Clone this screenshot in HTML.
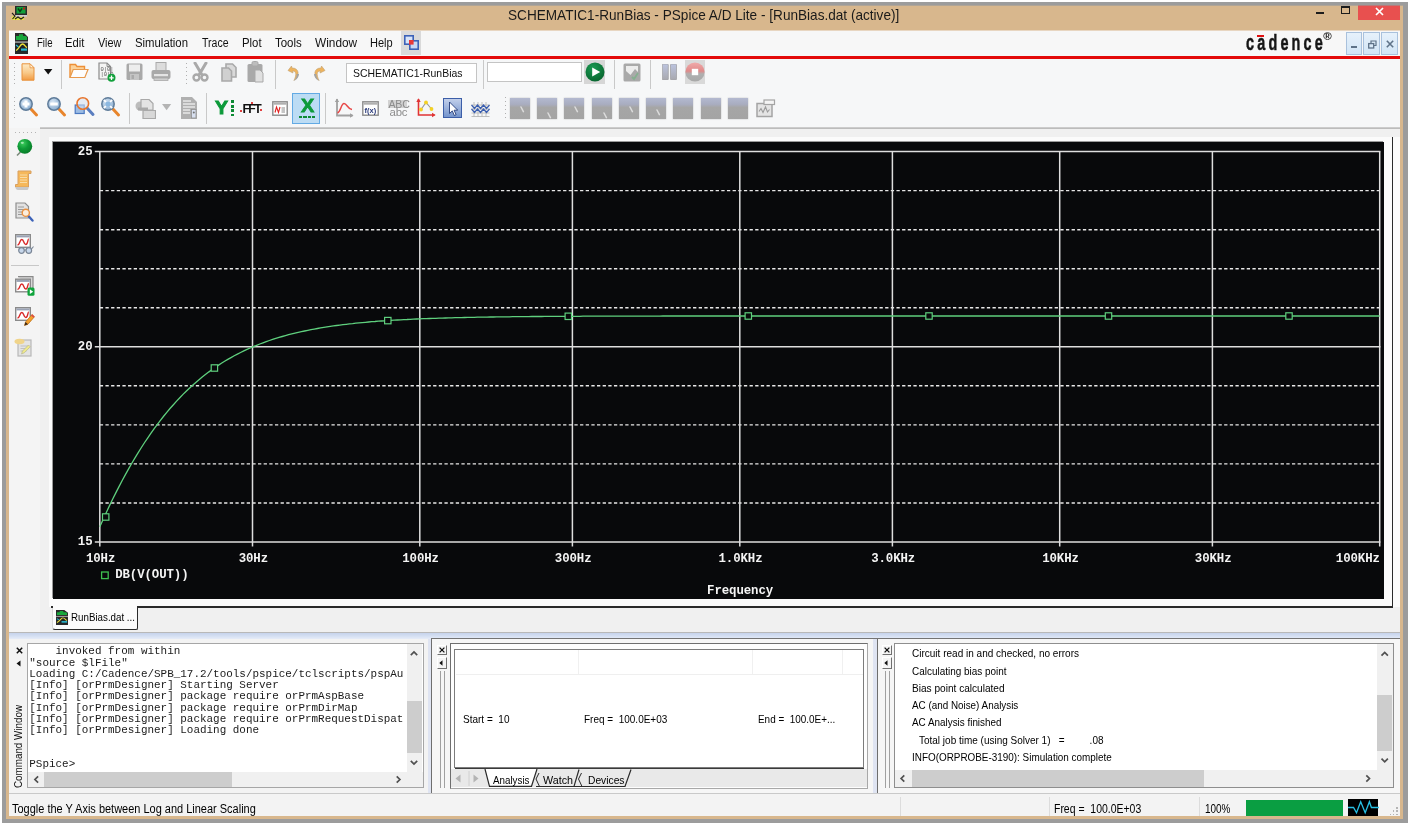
<!DOCTYPE html>
<html>
<head>
<meta charset="utf-8">
<title>PSpice</title>
<style>
*{box-sizing:border-box;margin:0;padding:0}
html,body{width:1412px;height:828px;overflow:hidden;background:#fff}
body{font-family:"Liberation Sans",sans-serif;font-size:12px;color:#000;position:relative}
.abs{position:absolute}
#wgrey{left:2px;top:2px;width:1406px;height:821px;background:#9c9c9c}
#wtan{left:6px;top:6px;width:1397px;height:813px;background:#d8b78d;box-shadow:0 -1px 0 #b0a597}
#content{left:9px;top:30px;width:1391px;height:786px;background:#f1f1f1;overflow:hidden}
/* title */
#title{left:508.3px;top:6px;white-space:nowrap;font-size:15px;line-height:18px;color:#1a1a1a}
#closebtn{left:1358px;top:6px;width:42px;height:14px;background:#e8504f}
/* menu */
#menubar{left:0;top:0;width:1391px;height:26px;background:#f7f7f7}
.mi{position:absolute;top:6px;font-size:12.5px;line-height:15px;color:#111;white-space:nowrap}
#redline{left:0;top:26px;width:1391px;height:3px;background:#e30a0a}
#tb1{left:0;top:29px;width:1391px;height:31px;background:#f6f7f8}
#tb2{left:0;top:60px;width:1391px;height:38px;background:#f6f7f8}
#tbline{left:31px;top:97px;width:1360px;height:2px;background:linear-gradient(#d4d4d4,#b4b4b4)}
.vsep{position:absolute;width:1px;background:#cfcfcf}
.tbox{position:absolute;background:#fff;border:1px solid #c4c4c4;font-size:10.5px;line-height:18px;padding-left:6px;color:#111;white-space:nowrap;overflow:hidden}
/* workspace */
#side{left:0;top:98px;width:31px;height:508px;background:#f4f4f4}
#mdi{left:31px;top:99px;width:1360px;height:507px;background:#f0f0f0}
#mdiin{left:40px;top:107px;width:1351px;height:470px;background:#fbfbfb}
#plot{left:44px;top:112px;width:1331px;height:457px;background:#08090b;overflow:hidden;box-shadow:-1px -1px 0 #9a9a9a}
.pl{position:absolute;font-family:"Liberation Mono",monospace;font-weight:bold;font-size:12.4px;line-height:12px;color:#f4f4f4;white-space:nowrap;letter-spacing:-0.1px}
/* bottom panels */
#bsep{left:0;top:602px;width:1391px;height:7px;background:linear-gradient(#b8b8b8 0,#b8b8b8 1px,#c6d3ec 1px,#d4dff2 4px,#e6ecf8 7px)}
#bottom{left:0;top:609px;width:1391px;height:154px;background:#f0f0f0}
#status{left:0;top:763px;width:1391px;height:23px;background:#f3f3f3;border-top:1px solid #c9c9c9}
.mono{font-family:"Liberation Mono",monospace}
</style>
</head>
<body><div id="all" style="position:absolute;left:0;top:0;width:1412px;height:828px;will-change:transform">
<div id="wgrey" class="abs"></div>
<div id="wtan" class="abs"></div>
<div id="title" class="abs"><span style="display:inline-block;white-space:pre;font-size:14.6px;font-weight:normal;transform:scaleX(0.9320);transform-origin:0 50%;color:#1a1a1a">SCHEMATIC1-RunBias - PSpice A/D Lite - [RunBias.dat (active)]</span></div>
<div id="closebtn" class="abs"></div><div class="abs" style="left:1358px;top:5px;width:42px;height:1px;background:#b87a7a"></div>
<svg class="abs" style="left:10.0px;top:6.0px" width="18" height="16" viewBox="0 0 18 16" ><rect x="5" y="0" width="12" height="9" fill="#2a2a2a"/><rect x="6.5" y="1" width="9" height="6.5" fill="#11a03a"/><path d="M8 2.5l2 3 2-3" stroke="#0a3a12" stroke-width="1.4" fill="none"/><rect x="13" y="1.5" width="2" height="2" fill="#c01818"/><rect x="4" y="9" width="13" height="1.6" fill="#cfcfcf"/><path d="M1 6l3 3-3 3 2 2h11v-3H6z" fill="#e8e24a"/><path d="M2 7l3 3-2.5 3M5 13l3-2 3 2 3-2" stroke="#202020" stroke-width="1.1" fill="none"/></svg>
<div class="abs" style="left:1316px;top:12px;width:8px;height:2px;background:#1c1c1c"></div>
<div class="abs" style="left:1341px;top:6px;width:9px;height:8px;border:1.3px solid #1c1c1c;border-top-width:2px"></div>
<svg class="abs" style="left:1374.5px;top:6.5px" width="9" height="9" viewBox="0 0 9 9" ><path d="M1 1l7 7M8 1l-7 7" stroke="#fff" stroke-width="1.7"/></svg>
<div id="content" class="abs">
  <div id="menubar" class="abs"><div class="abs" style="left:0;top:0;width:1391px;height:1px;background:#e8d6c1"></div>
    <span class="mi" style="left:27.5px"><span style="display:inline-block;white-space:pre;font-size:12px;font-weight:normal;transform:scaleX(0.8013);transform-origin:0 50%;">File</span></span>
    <span class="mi" style="left:56.4px"><span style="display:inline-block;white-space:pre;font-size:12px;font-weight:normal;transform:scaleX(0.9378);transform-origin:0 50%;">Edit</span></span>
    <span class="mi" style="left:88.5px"><span style="display:inline-block;white-space:pre;font-size:12px;font-weight:normal;transform:scaleX(0.9071);transform-origin:0 50%;">View</span></span>
    <span class="mi" style="left:125.6px"><span style="display:inline-block;white-space:pre;font-size:12px;font-weight:normal;transform:scaleX(0.9459);transform-origin:0 50%;">Simulation</span></span>
    <span class="mi" style="left:192.9px"><span style="display:inline-block;white-space:pre;font-size:12px;font-weight:normal;transform:scaleX(0.8765);transform-origin:0 50%;">Trace</span></span>
    <span class="mi" style="left:232.5px"><span style="display:inline-block;white-space:pre;font-size:12px;font-weight:normal;transform:scaleX(0.9474);transform-origin:0 50%;">Plot</span></span>
    <span class="mi" style="left:265.9px"><span style="display:inline-block;white-space:pre;font-size:12px;font-weight:normal;transform:scaleX(0.9566);transform-origin:0 50%;">Tools</span></span>
    <span class="mi" style="left:305.7px"><span style="display:inline-block;white-space:pre;font-size:12px;font-weight:normal;transform:scaleX(0.9862);transform-origin:0 50%;">Window</span></span>
    <span class="mi" style="left:360.9px"><span style="display:inline-block;white-space:pre;font-size:12px;font-weight:normal;transform:scaleX(0.9195);transform-origin:0 50%;">Help</span></span>
    <svg class="abs" style="left:6.0px;top:3.0px" width="13" height="21" viewBox="0 0 13 21" preserveAspectRatio="none"><path d="M0 0h9l4 4v17H0z" fill="#2a2a2a"/><path d="M1 5V3h3V1.3h4V3h2.5l1.5 1v3H1z" fill="#18a83c"/><rect x="0" y="8.3" width="13" height="1.6" fill="#9a9a9a"/><rect x="1" y="10.5" width="11" height="8" fill="#1f2426"/><path d="M1 17.5c3-1 4-6.5 6.5-6.5s2.5 3 4.5 3.5" stroke="#f0e23a" stroke-width="1.3" fill="none"/><rect x="6" y="15.5" width="6" height="2.2" fill="#28b8d0"/><path d="M1 12l2.5 2" stroke="#28b8d0" stroke-width="1.2"/></svg>
<div class="abs" style="left:391.5px;top:1px;width:20.5px;height:24px;background:#dadada"></div>
<svg class="abs" style="left:394.5px;top:4.5px" width="15" height="15" viewBox="0 0 15 15" ><rect x="0.8" y="0.8" width="8.4" height="8.4" fill="#d8e4f8" stroke="#3c62b8" stroke-width="1.6"/><rect x="5.8" y="5.8" width="8.4" height="8.4" fill="#c8d8f4" stroke="#3c62b8" stroke-width="1.6"/><rect x="5" y="5" width="4.6" height="4.6" fill="#e83838"/></svg>
<div class="abs" style="left:1236.5px;top:1.1px;font-weight:bold;font-size:21.2px;line-height:24px;color:#161616;white-space:nowrap;letter-spacing:4.7px;-webkit-text-stroke:0.5px #161616;transform:scaleX(0.68);transform-origin:0 0">cadence</div>
<div class="abs" style="left:1248.4px;top:5px;width:6.4px;height:1.6px;background:#e01010"></div>
<div class="abs" style="left:1314.2px;top:-0.5px;font-size:11.5px;line-height:12px;color:#151515;font-weight:bold">&#174;</div>
<div class="abs" style="left:1337.0px;top:2px;width:16.4px;height:22.6px;background:linear-gradient(#e6f1fb,#d2e5f6);border:1px solid #a9c1dc"></div>
<div class="abs" style="left:1354.4px;top:2px;width:16.4px;height:22.6px;background:linear-gradient(#e6f1fb,#d2e5f6);border:1px solid #a9c1dc"></div>
<div class="abs" style="left:1372.2px;top:2px;width:16.4px;height:22.6px;background:linear-gradient(#e6f1fb,#d2e5f6);border:1px solid #a9c1dc"></div>
<div class="abs" style="left:1341.5px;top:15.8px;width:6px;height:2px;background:#5e7288"></div>
<svg class="abs" style="left:1359.0px;top:9.5px" width="9" height="9" viewBox="0 0 9 9" ><path d="M3 3V1h5v4.5H6" stroke="#5e7288" stroke-width="1.2" fill="none"/><rect x="0.7" y="3.6" width="5" height="4.4" fill="none" stroke="#5e7288" stroke-width="1.3"/></svg>
<svg class="abs" style="left:1376.5px;top:10.0px" width="8" height="8" viewBox="0 0 8 8" ><path d="M0.8 0.8l6.4 6.4M7.2 0.8l-6.4 6.4" stroke="#5e7288" stroke-width="1.6"/></svg>
  </div>
  <div id="redline" class="abs"></div>
  <div id="tb1" class="abs">
    <div class="abs" style="left:4.5px;top:4px;width:1px;height:22px;background:repeating-linear-gradient(#b0b0b0 0 1.5px,transparent 1.5px 4px)"></div>
<svg class="abs" style="left:11.5px;top:3.5px" width="14" height="18" viewBox="0 0 14 18" ><defs><linearGradient id="gN" x1="0" y1="0" x2="0" y2="1"><stop offset="0" stop-color="#fdebc8"/><stop offset="0.55" stop-color="#f8c888"/><stop offset="1" stop-color="#f29a42"/></linearGradient></defs><path d="M1 0.8h8l4 4v12.4H1z" fill="url(#gN)" stroke="#e8923c" stroke-width="1"/><path d="M9 0.8v4h4z" fill="#fff3dc" stroke="#e8923c" stroke-width="0.8"/></svg>
<svg class="abs" style="left:35.0px;top:9.8px" width="9" height="6" viewBox="0 0 9 6" ><path d="M0 0h8.4L4.2 5.5z" fill="#111"/></svg>
<div class="vsep" style="left:51.5px;top:1.0px;height:28.5px;background:#c9c9c9"></div>
<svg class="abs" style="left:59.5px;top:4.0px" width="20" height="16" viewBox="0 0 20 16" ><path d="M1 14.5V1.5h5.5l1.5 2h7.5v3" fill="#fbd29a" stroke="#ee8f36" stroke-width="1.4"/><path d="M1 14.5l3.2-8h14.8l-3.2 8z" fill="#fdfdfd" stroke="#e89a4e" stroke-width="1.2"/></svg>
<svg class="abs" style="left:88.5px;top:3.0px" width="18" height="20" viewBox="0 0 18 20" ><path d="M1 1h8l3.5 3.5V17H1z" fill="#f4f4f4" stroke="#8a8a8a" stroke-width="1.2"/><path d="M9 1v3.5h3.5" fill="none" stroke="#8a8a8a" stroke-width="1"/><text x="2.4" y="8.5" font-family="Liberation Mono" font-size="5.5" fill="#555">0|0|</text><text x="2.4" y="13.5" font-size="5.5" font-family="Liberation Mono" fill="#555">|0|0</text><circle cx="13.5" cy="15.8" r="4" fill="#12a03c"/><path d="M11.3 15.8h4.4M13.5 13.6v4.4" stroke="#fff" stroke-width="1.3"/></svg>
<svg class="abs" style="left:116.5px;top:4.0px" width="17" height="18" viewBox="0 0 17 18" ><rect x="0.5" y="0.5" width="16" height="16.5" rx="1.5" fill="#a9a9a9"/><rect x="3" y="1.5" width="11" height="7" fill="#ededed"/><rect x="4" y="11" width="9" height="6" fill="#c4c4c4"/><rect x="5.5" y="12" width="2.5" height="4" fill="#a9a9a9"/></svg>
<svg class="abs" style="left:141.5px;top:2.5px" width="20" height="20" viewBox="0 0 20 20" ><rect x="5" y="0.5" width="10" height="8" fill="#dcdcdc" stroke="#a9a9a9" stroke-width="1"/><rect x="0.5" y="8" width="19" height="9" rx="2" fill="#a9a9a9"/><rect x="3" y="12" width="14" height="2.2" fill="#e4e4e4"/><rect x="3" y="16" width="14" height="2.5" fill="#cfcfcf" stroke="#a9a9a9" stroke-width="0.8"/></svg>
<div class="abs" style="left:176.5px;top:4px;width:1px;height:22px;background:repeating-linear-gradient(#b0b0b0 0 1.5px,transparent 1.5px 4px)"></div>
<svg class="abs" style="left:183.0px;top:2.5px" width="17" height="21" viewBox="0 0 17 21" ><path d="M3 1l6.5 11M14 1L7.5 12" stroke="#a9a9a9" stroke-width="3" stroke-linecap="round"/><circle cx="4.5" cy="15.5" r="3" fill="none" stroke="#a9a9a9" stroke-width="2.4"/><circle cx="12.5" cy="15.5" r="3" fill="none" stroke="#a9a9a9" stroke-width="2.4"/></svg>
<svg class="abs" style="left:211.5px;top:3.5px" width="16" height="19" viewBox="0 0 16 19" ><path d="M5 1h6.5l3.5 3.5V14H5z" fill="#d9d9d9" stroke="#a9a9a9" stroke-width="1.6"/><path d="M1 5h6.5l3 3V18H1z" fill="#d0d0d0" stroke="#a9a9a9" stroke-width="1.6"/></svg>
<svg class="abs" style="left:238.0px;top:1.5px" width="17" height="22" viewBox="0 0 17 22" ><rect x="0.5" y="3" width="15" height="18" rx="1.5" fill="#a9a9a9"/><rect x="5" y="0.5" width="6" height="4.5" rx="1.5" fill="#bdbdbd" stroke="#a9a9a9"/><path d="M8 9h5l3 3v9H8z" fill="#e0e0e0" stroke="#a9a9a9" stroke-width="1"/></svg>
<div class="vsep" style="left:265.5px;top:1.0px;height:28.5px;background:#c9c9c9"></div>
<svg class="abs" style="left:277.5px;top:5.5px" width="13" height="17" viewBox="0 0 13 17" ><path d="M4.5 1L1 5.5l5 2.5-0.5-2c3.5 0 4.5 3 1.5 9.5 6-5 5.5-12.5-2-12.5z" fill="#eeb45e" stroke="#c0a070" stroke-width="0.6"/><path d="M9.6 9c0.6 2-0.6 4.5-2.6 7 3.5-2 5-4.5 5-7z" fill="#a3a3a3"/></svg>
<svg class="abs" style="left:304.0px;top:5.5px" width="13" height="17" viewBox="0 0 13 17" ><g transform="translate(13,0) scale(-1,1)"><path d="M4.5 1L1 5.5l5 2.5-0.5-2c3.5 0 4.5 3 1.5 9.5 6-5 5.5-12.5-2-12.5z" fill="#eeb45e" stroke="#c0a070" stroke-width="0.6"/><path d="M9.6 9c0.6 2-0.6 4.5-2.6 7 3.5-2 5-4.5 5-7z" fill="#a3a3a3"/></g></svg>
<div class="tbox" style="left:337.2px;top:3.6px;width:131px;height:20px"><span style="display:inline-block;white-space:pre;font-size:10.8px;font-weight:normal;transform:scaleX(0.9673);transform-origin:0 50%;">SCHEMATIC1-RunBias</span></div>
<div class="vsep" style="left:474.0px;top:1.0px;height:28.5px;background:#c9c9c9"></div>
<div class="tbox" style="left:478.3px;top:3.3px;width:94.5px;height:20px"></div>
<div class="abs" style="left:575.2px;top:1.4px;width:20.6px;height:23.6px;background:#d6d6d6"></div>
<svg class="abs" style="left:576.3px;top:3.2px" width="20" height="20" viewBox="0 0 20 20" ><defs><radialGradient id="gP" cx="0.4" cy="0.3" r="0.8"><stop offset="0" stop-color="#1a9a52"/><stop offset="1" stop-color="#06602c"/></radialGradient></defs><circle cx="10" cy="10" r="9.5" fill="url(#gP)"/><path d="M7.2 5.4v9.2l8-4.6z" fill="#fff"/></svg>
<div class="vsep" style="left:605.2px;top:1.0px;height:28.5px;background:#c9c9c9"></div>
<svg class="abs" style="left:613.5px;top:3.5px" width="18" height="19" viewBox="0 0 18 19" ><rect x="0.5" y="0.5" width="17" height="18" rx="1.5" fill="#a9a9a9"/><path d="M3 3h12v6l-3-3-4.5 6L3 8z" fill="#ececec"/><path d="M9 14l2 2 4-6" stroke="#86b090" stroke-width="1.8" fill="none"/></svg>
<div class="vsep" style="left:641.3px;top:1.0px;height:28.5px;background:#c9c9c9"></div>
<svg class="abs" style="left:652.5px;top:4.8px" width="15" height="16" viewBox="0 0 15 16" ><defs><linearGradient id="gPa" x1="0" y1="0" x2="0" y2="1"><stop offset="0" stop-color="#bcc4e0"/><stop offset="1" stop-color="#a8a8ae"/></linearGradient></defs><rect x="0.3" y="0" width="6" height="16" rx="1" fill="url(#gPa)" stroke="#a2a2a6" stroke-width="0.8"/><rect x="8.5" y="0" width="6" height="16" rx="1" fill="url(#gPa)" stroke="#a2a2a6" stroke-width="0.8"/></svg>
<div class="abs" style="left:676.2px;top:1.4px;width:20px;height:23.6px;background:#d9d9d9"></div>
<svg class="abs" style="left:676.4px;top:2.8px" width="20" height="20" viewBox="0 0 20 20" ><defs><linearGradient id="gSt" x1="0" y1="0" x2="0" y2="1"><stop offset="0" stop-color="#f0aaaa"/><stop offset="0.450" stop-color="#e08a8a"/><stop offset="0.6" stop-color="#b0b0b0"/><stop offset="1" stop-color="#a8a8a8"/></linearGradient></defs><circle cx="10" cy="10" r="9.6" fill="url(#gSt)"/><rect x="6.8" y="6.8" width="6.4" height="6.4" fill="#fff"/></svg>
  </div>
  <div id="tb2" class="abs">
    <div class="abs" style="left:4.5px;top:7px;width:1px;height:23px;background:repeating-linear-gradient(#b0b0b0 0 1.5px,transparent 1.5px 4px)"></div>
<svg class="abs" style="left:9.3px;top:6.2px" width="22" height="22" viewBox="0 0 22 22" ><defs><radialGradient id="gL" cx="0.4" cy="0.35" r="0.7"><stop offset="0" stop-color="#d8e6f4"/><stop offset="1" stop-color="#86aace"/></radialGradient></defs><path d="M12.5 12.5l6 6.5" stroke="#e8852c" stroke-width="3" stroke-linecap="round"/><circle cx="8" cy="8" r="6.2" fill="url(#gL)" stroke="#5f7c9a" stroke-width="1.5"/><path d="M4.5 8h7M8 4.5v7" stroke="#fff" stroke-width="3"/></svg>
<svg class="abs" style="left:36.9px;top:6.2px" width="22" height="22" viewBox="0 0 22 22" ><defs><radialGradient id="gL" cx="0.4" cy="0.35" r="0.7"><stop offset="0" stop-color="#d8e6f4"/><stop offset="1" stop-color="#86aace"/></radialGradient></defs><path d="M12.5 12.5l6 6.5" stroke="#e8852c" stroke-width="3" stroke-linecap="round"/><circle cx="8" cy="8" r="6.2" fill="url(#gL)" stroke="#5f7c9a" stroke-width="1.5"/><path d="M4.2 8h7.6" stroke="#fff" stroke-width="3"/></svg>
<svg class="abs" style="left:64.5px;top:6.0px" width="22" height="22" viewBox="0 0 22 22" ><rect x="1.2" y="9" width="9" height="8.5" fill="#9cbce4" stroke="#4a78c0" stroke-width="1.2"/><path d="M13 12l6 6.5" stroke="#5a7ec0" stroke-width="3" stroke-linecap="round"/><circle cx="8.8" cy="7.5" r="5.8" fill="#d6e2f2" fill-opacity="0.55" stroke="#e8752c" stroke-width="1.6"/></svg>
<svg class="abs" style="left:91.4px;top:6.2px" width="22" height="22" viewBox="0 0 22 22" ><defs><radialGradient id="gL" cx="0.4" cy="0.35" r="0.7"><stop offset="0" stop-color="#d8e6f4"/><stop offset="1" stop-color="#86aace"/></radialGradient></defs><path d="M12.5 12.5l6 6.5" stroke="#e8852c" stroke-width="3" stroke-linecap="round"/><circle cx="8" cy="8" r="6.2" fill="url(#gL)" stroke="#5f7c9a" stroke-width="1.5"/><circle cx="8" cy="8" r="2.6" fill="#8cb8e0"/><path d="M3.8 3.8l2 2M12.2 3.8l-2 2M3.8 12.2l2-2M12.2 12.2l-2-2" stroke="#fff" stroke-width="1.8"/></svg>
<div class="vsep" style="left:120.4px;top:3.0px;height:31.0px;background:#c9c9c9"></div>
<svg class="abs" style="left:126.0px;top:9.0px" width="21" height="20" viewBox="0 0 21 20" ><circle cx="5" cy="7" r="4.5" fill="#bcbcbc"/><path d="M6 0.5h8l4 4V11H6z" fill="#e4e4e4" stroke="#a9a9a9" stroke-width="1.2"/><rect x="3" y="8.5" width="10" height="3" fill="#a9a9a9"/><path d="M8 11.5h12.5V19.5H8z" fill="#d8d8d8" stroke="#a9a9a9" stroke-width="1.2"/></svg>
<svg class="abs" style="left:153.3px;top:13.5px" width="10" height="7" viewBox="0 0 10 7" ><path d="M0 0h9.2L4.6 6.2z" fill="#b4b4b4"/></svg>
<svg class="abs" style="left:170.5px;top:6.0px" width="18" height="24" viewBox="0 0 18 24" ><path d="M1 1h11l5 5v17H1z" fill="#b0b0b0"/><path d="M3 5h8M3 8h12M3 11h12M3 14h7M3 17h7" stroke="#e8e8e8" stroke-width="1.3"/><rect x="11.5" y="13.5" width="4.5" height="8.5" fill="#d8e0f0" stroke="#909090" stroke-width="0.8"/><circle cx="13.8" cy="16.5" r="1" fill="#707070"/></svg>
<div class="vsep" style="left:197.2px;top:3.0px;height:31.0px;background:#c9c9c9"></div>
<div class="abs" style="left:206.4px;top:6.8px;font-weight:bold;font-size:18.5px;line-height:22px;color:#0c9a3a;-webkit-text-stroke:0.9px #0c9a3a;transform:scaleX(1.06);transform-origin:0 0">Y</div>
<div class="abs" style="left:221.8px;top:10.299999999999997px;width:2.8px;height:16px;background:repeating-linear-gradient(#0c8a34 0 3.2px,transparent 3.2px 4.6px)"></div>
<div class="abs" style="left:233.4px;top:11.5px;font-weight:bold;font-size:12.2px;line-height:14px;color:#111;letter-spacing:-1.5px">FFT</div>
<div class="abs" style="left:231px;top:19.599999999999994px;width:2px;height:2px;background:#e04040"></div><div class="abs" style="left:251px;top:19.200000000000003px;width:2px;height:2px;background:#e04040"></div><div class="abs" style="left:241.5px;top:11.5px;width:2px;height:2px;background:#e04040"></div>
<svg class="abs" style="left:262.8px;top:10.8px" width="16" height="15" viewBox="0 0 16 15" ><rect x="0.8" y="0.8" width="14.4" height="13.4" fill="#fff" stroke="#8a8a8a" stroke-width="1.4"/><rect x="1.5" y="1.5" width="13" height="2.2" fill="#b0b0b0"/><path d="M3 11.5l1.5-5.5 2 5.5 1.5-5.5" stroke="#e02020" stroke-width="1.1" fill="none"/><path d="M9.5 7h3.5M9.5 9h3.5M9.5 11h3.5" stroke="#808080" stroke-width="0.9"/></svg>
<div class="abs" style="left:283.2px;top:2.9000000000000057px;width:27.6px;height:31.4px;background:#bcdcf4;border:1px solid #62aae4"></div>
<div class="abs" style="left:291.6px;top:5.2px;font-weight:bold;font-size:18.4px;line-height:22px;color:#0c9a3a;-webkit-text-stroke:0.8px #0c9a3a;transform:scaleX(1.08);transform-origin:0 0">X</div>
<div class="abs" style="left:290.2px;top:25.599999999999994px;width:15.6px;height:2.8px;background:repeating-linear-gradient(90deg,#0c8a34 0 3.4px,transparent 3.4px 4.4px)"></div>
<div class="vsep" style="left:315.7px;top:3.0px;height:31.0px;background:#c9c9c9"></div>
<svg class="abs" style="left:324.5px;top:8.0px" width="20" height="21" viewBox="0 0 20 21" ><path d="M3 1v16.5h15.5" stroke="#a0a0a0" stroke-width="1.8" fill="none"/><path d="M0.8 4L3 0.5 5.2 4zM16 15.3l3.5 2.2-3.5 2.2z" fill="#a0a0a0"/><path d="M3.5 15C7 13.5 7 5.5 10 5.5s3.5 5.5 8 6" stroke="#e84848" stroke-width="1.5" fill="none"/></svg>
<svg class="abs" style="left:353.4px;top:10.8px" width="17" height="15" viewBox="0 0 17 15" ><rect x="0.8" y="0.8" width="15.4" height="13.4" fill="#fff" stroke="#8a8a8a" stroke-width="1.4"/><rect x="1.5" y="1.5" width="14" height="2.2" fill="#b0b0b0"/><text x="2.6" y="12" font-size="7.5" font-weight="bold" font-family="Liberation Sans" fill="#2a3a7a">f(x)</text></svg>
<div class="abs" style="left:379.3px;top:9.599999999999994px;width:18.6px;height:8.6px;background:#d2d2d2"></div>
<div class="abs" style="left:379.6px;top:7.799999999999997px;font-size:10.6px;line-height:12px;color:#8c8c8c;letter-spacing:-0.3px">ABC</div>
<div class="abs" style="left:380.6px;top:16.400000000000006px;font-size:11.4px;line-height:12px;color:#8c8c8c;letter-spacing:-0.3px">abc</div>
<svg class="abs" style="left:406.5px;top:8.0px" width="20" height="21" viewBox="0 0 20 21" ><path d="M2.5 1v16h16" stroke="#e03434" stroke-width="1.6" fill="none"/><path d="M0.3 4L2.5 0.3 4.7 4zM16 14.8l3.7 2.2-3.7 2.2z" fill="#e03434"/><path d="M5 11.5l5-7 5.5 6.5" stroke="#9a9a9a" stroke-width="1.1" fill="none"/><circle cx="5" cy="11.5" r="1.9" fill="#f4d224"/><circle cx="10" cy="4.5" r="1.9" fill="#f4d224"/><circle cx="15.5" cy="11" r="1.9" fill="#f4d224"/></svg>
<div class="abs" style="left:434px;top:8.200000000000003px;width:19px;height:19.6px;background:linear-gradient(#c2cfea,#7494cc);border:1.3px solid #3c5ea8"></div>
<svg class="abs" style="left:439.0px;top:10.5px" width="10" height="16" viewBox="0 0 10 16" ><path d="M1.5 1v11.5l2.8-2.6 2 4.6 1.8-0.8-2-4.5h3.6z" fill="#fff" stroke="#223a78" stroke-width="0.9"/></svg>
<svg class="abs" style="left:461.5px;top:10.5px" width="19" height="17" viewBox="0 0 19 17" ><path d="M3 1v15M7 1v15M11 1v15M15 1v15M0.5 4h18M0.5 8h18M0.5 12h18M0.5 15.5h18" stroke="#b8b8b8" stroke-width="0.9"/><path d="M0.5 4l3 3.5 3-3.5 3 3.5 3-3.5 3 3.5 3-3.5M0.5 8l3 3.5 3-3.5 3 3.5 3-3.5 3 3.5 3-3.5" stroke="#3a5eb0" stroke-width="1.2" fill="none"/></svg>
<div class="abs" style="left:495.5px;top:7px;width:1px;height:23px;background:repeating-linear-gradient(#b0b0b0 0 1.5px,transparent 1.5px 4px)"></div>
<div class="abs" style="left:500.6px;top:8.2px;width:20px;height:21.3px;background:linear-gradient(#b3b9d0 0,#a9adc0 30%,#a6a6a6 45%,#a4a4a4 100%);box-shadow:0 0 1.5px #bbb"></div>
<svg class="abs" style="left:510.8px;top:15.8px" width="5" height="7" viewBox="0 0 5 7" ><path d="M1 1l2.4 4.6" stroke="#dcdcdc" stroke-width="1.5" stroke-linecap="round"/></svg>
<div class="abs" style="left:527.9px;top:8.2px;width:20px;height:21.3px;background:linear-gradient(#b3b9d0 0,#a9adc0 30%,#a6a6a6 45%,#a4a4a4 100%);box-shadow:0 0 1.5px #bbb"></div>
<svg class="abs" style="left:537.7px;top:22.0px" width="5" height="7" viewBox="0 0 5 7" ><path d="M1 1l2.4 4.6" stroke="#dcdcdc" stroke-width="1.5" stroke-linecap="round"/></svg>
<div class="abs" style="left:555.2px;top:8.2px;width:20px;height:21.3px;background:linear-gradient(#b3b9d0 0,#a9adc0 30%,#a6a6a6 45%,#a4a4a4 100%);box-shadow:0 0 1.5px #bbb"></div>
<svg class="abs" style="left:565.2px;top:15.8px" width="5" height="7" viewBox="0 0 5 7" ><path d="M1 1l2.4 4.6" stroke="#dcdcdc" stroke-width="1.5" stroke-linecap="round"/></svg>
<div class="abs" style="left:582.5px;top:8.2px;width:20px;height:21.3px;background:linear-gradient(#b3b9d0 0,#a9adc0 30%,#a6a6a6 45%,#a4a4a4 100%);box-shadow:0 0 1.5px #bbb"></div>
<svg class="abs" style="left:593.5px;top:22.0px" width="5" height="7" viewBox="0 0 5 7" ><path d="M1 1l2.4 4.6" stroke="#dcdcdc" stroke-width="1.5" stroke-linecap="round"/></svg>
<div class="abs" style="left:609.8px;top:8.2px;width:20px;height:21.3px;background:linear-gradient(#b3b9d0 0,#a9adc0 30%,#a6a6a6 45%,#a4a4a4 100%);box-shadow:0 0 1.5px #bbb"></div>
<svg class="abs" style="left:619.9px;top:15.8px" width="5" height="7" viewBox="0 0 5 7" ><path d="M1 1l2.4 4.6" stroke="#dcdcdc" stroke-width="1.5" stroke-linecap="round"/></svg>
<div class="abs" style="left:637.1px;top:8.2px;width:20px;height:21.3px;background:linear-gradient(#b3b9d0 0,#a9adc0 30%,#a6a6a6 45%,#a4a4a4 100%);box-shadow:0 0 1.5px #bbb"></div>
<svg class="abs" style="left:646.8px;top:19.0px" width="5" height="7" viewBox="0 0 5 7" ><path d="M1 1l2.4 4.6" stroke="#dcdcdc" stroke-width="1.5" stroke-linecap="round"/></svg>
<div class="abs" style="left:664.4px;top:8.2px;width:20px;height:21.3px;background:linear-gradient(#b3b9d0 0,#a9adc0 30%,#a6a6a6 45%,#a4a4a4 100%);box-shadow:0 0 1.5px #bbb"></div>
<div class="abs" style="left:691.7px;top:8.2px;width:20px;height:21.3px;background:linear-gradient(#b3b9d0 0,#a9adc0 30%,#a6a6a6 45%,#a4a4a4 100%);box-shadow:0 0 1.5px #bbb"></div>
<div class="abs" style="left:719.0px;top:8.2px;width:20px;height:21.3px;background:linear-gradient(#b3b9d0 0,#a9adc0 30%,#a6a6a6 45%,#a4a4a4 100%);box-shadow:0 0 1.5px #bbb"></div>
<svg class="abs" style="left:747.0px;top:8.5px" width="20" height="19" viewBox="0 0 20 19" ><rect x="1" y="4.5" width="15" height="13" fill="#e4e4e4" stroke="#a4a4a4" stroke-width="1.5"/><rect x="8" y="1" width="10.5" height="4.5" fill="#f4f4f4" stroke="#a4a4a4" stroke-width="1.2"/><path d="M3 12.5l2-3 2 4 2.5-5.5 2 5 2-2.5" stroke="#9a9a9a" stroke-width="1.1" fill="none"/></svg>
  </div>
  <div id="side" class="abs">
    <div class="abs" style="left:5.5px;top:4px;width:21px;height:1px;background:repeating-linear-gradient(90deg,#b4b4b4 0 1.5px,transparent 1.5px 4px)"></div>
<svg class="abs" style="left:6.0px;top:10.0px" width="20" height="19" viewBox="0 0 20 19" ><defs><radialGradient id="gB" cx="0.38" cy="0.3" r="0.75"><stop offset="0" stop-color="#3ccc5c"/><stop offset="0.5" stop-color="#0e9a36"/><stop offset="1" stop-color="#087a28"/></radialGradient></defs><path d="M2 17.5l5-5" stroke="#7a8a7a" stroke-width="1.6"/><circle cx="9.8" cy="8.3" r="7.4" fill="url(#gB)"/><ellipse cx="7.3" cy="4.8" rx="1.6" ry="1.1" fill="#b8f0c4" opacity="0.8"/></svg>
<svg class="abs" style="left:5.0px;top:41.5px" width="19" height="22" viewBox="0 0 19 22" ><path d="M4 1h13v2.5h-2.5V17H1.5v-2.5H4z" fill="#f6b85a" stroke="#d8a060" stroke-width="1"/><path d="M1.5 17c0 2 1 3 2.5 3h9c1.5 0 1.5-1.5 1.5-3z" fill="#c8c8c8"/><path d="M6 5h7M6 7.5h7M6 10h7M6 12.5h7" stroke="#f8dca8" stroke-width="1.2"/></svg>
<svg class="abs" style="left:6.0px;top:74.0px" width="19" height="20" viewBox="0 0 19 20" ><path d="M1 1h9l3.5 3.5V16H1z" fill="#e2e2e2" stroke="#8e8e8e" stroke-width="1.2"/><path d="M3 5h6M3 7.5h8M3 10h5M3 12.5h5" stroke="#9a9a9a" stroke-width="1"/><path d="M13 13.5l4.5 5" stroke="#3c62b8" stroke-width="2.4" stroke-linecap="round"/><circle cx="10.8" cy="10.8" r="3.6" fill="#fbeede" stroke="#e89040" stroke-width="1.4"/></svg>
<svg class="abs" style="left:6.0px;top:106.0px" width="19" height="21" viewBox="0 0 19 21" ><rect x="0.7" y="0.7" width="14.6" height="12.6" fill="#fff" stroke="#8a8a8a" stroke-width="1.4"/><rect x="1.4" y="1.4" width="13.2" height="2" fill="#9aa2b4"/><path d="M2.5 11c2.5 0 2-5.5 4.3-5.5s1.7 5 4 5 1.7-5.5 3-5.5" stroke="#d82828" stroke-width="1.4" fill="none"/><circle cx="6.5" cy="16.5" r="2.8" fill="#c8d8ec" stroke="#7a8696" stroke-width="1.2"/><circle cx="13.8" cy="16.5" r="2.8" fill="#c8d8ec" stroke="#7a8696" stroke-width="1.2"/><path d="M9.3 16h1.7M16.5 15l2-2.5" stroke="#7a8696" stroke-width="1.1"/></svg>
<div class="abs" style="left:1.5px;top:136.8px;width:28.5px;height:1px;background:#c8c8c8"></div>
<svg class="abs" style="left:6.0px;top:148.0px" width="20" height="20" viewBox="0 0 20 20" ><path d="M3 0.7h15v12" stroke="#8a8a8a" stroke-width="1.2" fill="#d8d8d8"/><g transform="translate(0,2.5)"><rect x="0.7" y="0.7" width="14.6" height="12.6" fill="#fff" stroke="#8a8a8a" stroke-width="1.4"/><rect x="1.4" y="1.4" width="13.2" height="2" fill="#9aa2b4"/><path d="M2.5 11c2.5 0 2-5.5 4.3-5.5s1.7 5 4 5 1.7-5.5 3-5.5" stroke="#d82828" stroke-width="1.4" fill="none"/></g><rect x="12.5" y="11.5" width="7" height="8.3" rx="1.5" fill="#10a43c"/><path d="M14.8 13.3v4.8l3.4-2.4z" fill="#fff"/></svg>
<svg class="abs" style="left:6.0px;top:179.3px" width="20" height="21" viewBox="0 0 20 21" ><rect x="0.7" y="0.7" width="14.6" height="12.6" fill="#fff" stroke="#8a8a8a" stroke-width="1.4"/><rect x="1.4" y="1.4" width="13.2" height="2" fill="#9aa2b4"/><path d="M2.5 11c2.5 0 2-5.5 4.3-5.5s1.7 5 4 5 1.7-5.5 3-5.5" stroke="#d82828" stroke-width="1.4" fill="none"/><path d="M9.5 18.5l1-3.5 6.5-7.5 2.5 2.2-6.5 7.5z" fill="#f4a02c" stroke="#b86a10" stroke-width="0.7"/><path d="M9.5 18.5l1-3.5 2.5 2.2z" fill="#3a2a1a"/><path d="M16 8.5l1-1.2 2.5 2.2-1 1.2z" fill="#e04848"/></svg>
<svg class="abs" style="left:5.0px;top:209.0px" width="19" height="21" viewBox="0 0 19 21" ><rect x="4" y="3" width="13" height="16" fill="#e4e4e4" stroke="#b8b8b8" stroke-width="1.2"/><ellipse cx="5.5" cy="4.5" rx="5" ry="2.8" fill="#f0d48a"/><path d="M6.5 9h8M6.5 11.5h8M6.5 14h6" stroke="#c0c0c0" stroke-width="1"/><path d="M7.5 17l1-3 6-6 1.8 1.8-6 6z" fill="#f0ea8a" stroke="#b8b890" stroke-width="0.7"/></svg>
  </div>
  <div id="tbline" class="abs"></div>
  <div id="mdi" class="abs"></div>
  <div id="mdiin" class="abs"></div>
  <div id="plot" class="abs">
<svg width="1331" height="457" viewBox="0 0 1331 457" style="position:absolute;left:0;top:0">
<line x1="46.8" y1="361.0" x2="1326.7" y2="361.0" stroke="#e8e8e8" stroke-width="1.4" stroke-dasharray="3.3 2.35"/>
<line x1="46.8" y1="321.9" x2="1326.7" y2="321.9" stroke="#e8e8e8" stroke-width="1.4" stroke-dasharray="3.3 2.35"/>
<line x1="46.8" y1="282.9" x2="1326.7" y2="282.9" stroke="#e8e8e8" stroke-width="1.4" stroke-dasharray="3.3 2.35"/>
<line x1="46.8" y1="243.8" x2="1326.7" y2="243.8" stroke="#e8e8e8" stroke-width="1.4" stroke-dasharray="3.3 2.35"/>
<line x1="46.8" y1="165.8" x2="1326.7" y2="165.8" stroke="#e8e8e8" stroke-width="1.4" stroke-dasharray="3.3 2.35"/>
<line x1="46.8" y1="126.7" x2="1326.7" y2="126.7" stroke="#e8e8e8" stroke-width="1.4" stroke-dasharray="3.3 2.35"/>
<line x1="46.8" y1="87.7" x2="1326.7" y2="87.7" stroke="#e8e8e8" stroke-width="1.4" stroke-dasharray="3.3 2.35"/>
<line x1="46.8" y1="48.6" x2="1326.7" y2="48.6" stroke="#e8e8e8" stroke-width="1.4" stroke-dasharray="3.3 2.35"/>
<line x1="41.8" y1="400.0" x2="1327.4" y2="400.0" stroke="#dedede" stroke-width="1.5"/>
<line x1="41.8" y1="204.8" x2="1327.4" y2="204.8" stroke="#dedede" stroke-width="1.5"/>
<line x1="41.8" y1="9.6" x2="1327.4" y2="9.6" stroke="#dedede" stroke-width="1.5"/>
<line x1="46.8" y1="9.6" x2="46.8" y2="404.5" stroke="#dedede" stroke-width="1.5"/>
<line x1="199.5" y1="9.6" x2="199.5" y2="404.5" stroke="#dedede" stroke-width="1.5"/>
<line x1="366.8" y1="9.6" x2="366.8" y2="404.5" stroke="#dedede" stroke-width="1.5"/>
<line x1="519.4" y1="9.6" x2="519.4" y2="404.5" stroke="#dedede" stroke-width="1.5"/>
<line x1="686.8" y1="9.6" x2="686.8" y2="404.5" stroke="#dedede" stroke-width="1.5"/>
<line x1="839.4" y1="9.6" x2="839.4" y2="404.5" stroke="#dedede" stroke-width="1.5"/>
<line x1="1006.7" y1="9.6" x2="1006.7" y2="404.5" stroke="#dedede" stroke-width="1.5"/>
<line x1="1159.4" y1="9.6" x2="1159.4" y2="404.5" stroke="#dedede" stroke-width="1.5"/>
<line x1="1326.7" y1="9.6" x2="1326.7" y2="404.5" stroke="#dedede" stroke-width="1.5"/>
<polyline fill="none" stroke="#5fd07e" stroke-width="1.3" points="46.8,384.8 50.0,377.7 53.2,370.7 56.4,363.9 59.6,357.3 62.8,350.9 66.0,344.6 69.2,338.5 72.4,332.6 75.6,326.9 78.8,321.3 82.0,315.8 85.2,310.6 88.4,305.5 91.6,300.5 94.8,295.8 98.0,291.1 101.2,286.6 104.4,282.3 107.6,278.1 110.8,274.0 114.0,270.1 117.2,266.3 120.4,262.7 123.6,259.1 126.8,255.7 130.0,252.4 133.2,249.3 136.4,246.2 139.6,243.3 142.8,240.4 146.0,237.7 149.2,235.1 152.4,232.6 155.6,230.1 158.8,227.8 162.0,225.5 165.2,223.4 168.4,221.3 171.6,219.3 174.8,217.4 178.0,215.6 181.2,213.8 184.4,212.1 187.6,210.5 190.8,208.9 194.0,207.4 197.2,206.0 200.4,204.6 203.6,203.3 206.8,202.0 210.0,200.8 213.2,199.6 216.4,198.5 219.6,197.4 222.8,196.4 226.0,195.4 229.2,194.5 232.4,193.6 235.6,192.7 238.8,191.9 242.0,191.1 245.2,190.4 248.4,189.7 251.6,189.0 254.8,188.3 258.0,187.7 261.2,187.1 264.4,186.5 267.6,185.9 270.8,185.4 274.0,184.9 277.2,184.4 280.4,183.9 283.6,183.5 286.8,183.1 290.0,182.7 293.2,182.3 296.4,181.9 299.6,181.6 302.8,181.2 306.0,180.9 309.2,180.6 312.4,180.3 315.6,180.0 318.8,179.7 322.0,179.5 325.2,179.2 328.4,179.0 331.6,178.8 334.8,178.6 338.0,178.4 341.2,178.2 344.4,178.0 347.6,177.8 350.8,177.6 354.0,177.5 357.2,177.3 360.4,177.1 363.6,177.0 366.8,176.9 370.0,176.7 373.2,176.6 376.4,176.5 379.6,176.4 382.8,176.3 386.0,176.2 389.2,176.1 392.4,176.0 395.6,175.9 398.8,175.8 402.0,175.7 405.2,175.6 408.4,175.6 411.6,175.5 414.8,175.4 418.0,175.4 421.2,175.3 424.4,175.2 427.6,175.2 430.8,175.1 434.0,175.1 437.2,175.0 440.4,175.0 443.6,174.9 446.8,174.9 450.0,174.8 453.2,174.8 456.4,174.8 459.6,174.7 462.8,174.7 466.0,174.7 469.2,174.6 472.4,174.6 475.6,174.6 478.8,174.5 482.0,174.5 485.2,174.5 488.4,174.5 491.6,174.4 494.8,174.4 498.0,174.4 501.2,174.4 504.4,174.4 507.6,174.3 510.8,174.3 514.0,174.3 517.2,174.3 520.4,174.3 523.6,174.3 526.8,174.3 530.0,174.2 533.2,174.2 536.4,174.2 539.6,174.2 542.8,174.2 546.0,174.2 549.2,174.2 552.4,174.2 555.6,174.2 558.8,174.1 562.0,174.1 565.2,174.1 568.4,174.1 571.6,174.1 574.8,174.1 578.0,174.1 581.2,174.1 584.4,174.1 587.6,174.1 590.8,174.1 594.0,174.1 597.2,174.1 600.4,174.1 603.6,174.1 606.8,174.1 610.0,174.0 613.2,174.0 616.4,174.0 619.6,174.0 622.8,174.0 626.0,174.0 629.2,174.0 632.4,174.0 635.6,174.0 638.8,174.0 642.0,174.0 645.2,174.0 648.4,174.0 651.6,174.0 654.8,174.0 658.0,174.0 661.2,174.0 664.4,174.0 667.6,174.0 670.8,174.0 674.0,174.0 677.2,174.0 680.4,174.0 683.6,174.0 686.8,174.0 689.9,174.0 693.1,174.0 696.3,174.0 699.5,174.0 702.7,174.0 705.9,174.0 709.1,174.0 712.3,174.0 715.5,174.0 718.7,174.0 721.9,174.0 725.1,174.0 728.3,174.0 731.5,174.0 734.7,174.0 737.9,174.0 741.1,174.0 744.3,174.0 747.5,174.0 750.7,174.0 753.9,174.0 757.1,174.0 760.3,174.0 763.5,174.0 766.7,174.0 769.9,174.0 773.1,174.0 776.3,174.0 779.5,174.0 782.7,174.0 785.9,174.0 789.1,174.0 792.3,174.0 795.5,174.0 798.7,174.0 801.9,174.0 805.1,174.0 808.3,174.0 811.5,174.0 814.7,174.0 817.9,174.0 821.1,174.0 824.3,174.0 827.5,174.0 830.7,174.0 833.9,174.0 837.1,174.0 840.3,174.0 843.5,174.0 846.7,174.0 849.9,174.0 853.1,174.0 856.3,174.0 859.5,174.0 862.7,174.0 865.9,174.0 869.1,174.0 872.3,174.0 875.5,174.0 878.7,174.0 881.9,174.0 885.1,174.0 888.3,174.0 891.5,174.0 894.7,174.0 897.9,174.0 901.1,174.0 904.3,174.0 907.5,174.0 910.7,174.0 913.9,174.0 917.1,174.0 920.3,174.0 923.5,174.0 926.7,174.0 929.9,174.0 933.1,174.0 936.3,174.0 939.5,174.0 942.7,174.0 945.9,174.0 949.1,174.0 952.3,174.0 955.5,174.0 958.7,174.0 961.9,174.0 965.1,174.0 968.3,174.0 971.5,174.0 974.7,174.0 977.9,174.0 981.1,174.0 984.3,174.0 987.5,174.0 990.7,174.0 993.9,174.0 997.1,174.0 1000.3,174.0 1003.5,174.0 1006.7,174.0 1009.9,174.0 1013.1,174.0 1016.3,174.0 1019.5,174.0 1022.7,174.0 1025.9,174.0 1029.1,174.0 1032.3,174.0 1035.5,174.0 1038.7,174.0 1041.9,174.0 1045.1,174.0 1048.3,174.0 1051.5,174.0 1054.7,174.0 1057.9,174.0 1061.1,174.0 1064.3,174.0 1067.5,174.0 1070.7,174.0 1073.9,174.0 1077.1,174.0 1080.3,174.0 1083.5,174.0 1086.7,174.0 1089.9,174.0 1093.1,174.0 1096.3,174.0 1099.5,174.0 1102.7,174.0 1105.9,174.0 1109.1,174.0 1112.3,174.0 1115.5,174.0 1118.7,174.0 1121.9,174.0 1125.1,174.0 1128.3,174.0 1131.5,174.0 1134.7,174.0 1137.9,174.0 1141.1,174.0 1144.3,174.0 1147.5,174.0 1150.7,174.0 1153.9,174.0 1157.1,174.0 1160.3,174.0 1163.5,174.0 1166.7,174.0 1169.9,174.0 1173.1,174.0 1176.3,174.0 1179.5,174.0 1182.7,174.0 1185.9,174.0 1189.1,174.0 1192.3,174.0 1195.5,174.0 1198.7,174.0 1201.9,174.0 1205.1,174.0 1208.3,174.0 1211.5,174.0 1214.7,174.0 1217.9,174.0 1221.1,174.0 1224.3,174.0 1227.5,174.0 1230.7,174.0 1233.9,174.0 1237.1,174.0 1240.3,174.0 1243.5,174.0 1246.7,174.0 1249.9,174.0 1253.1,174.0 1256.3,174.0 1259.5,174.0 1262.7,174.0 1265.9,174.0 1269.1,174.0 1272.3,174.0 1275.5,174.0 1278.7,174.0 1281.9,174.0 1285.1,174.0 1288.3,174.0 1291.5,174.0 1294.7,174.0 1297.9,174.0 1301.1,174.0 1304.3,174.0 1307.5,174.0 1310.7,174.0 1313.9,174.0 1317.1,174.0 1320.3,174.0 1323.5,174.0 1326.7,174.0"/>
<rect x="49.5" y="371.8" width="6.4" height="6.4" fill="#08090b" stroke="#5fd07e" stroke-width="1.2"/>
<rect x="158.2" y="222.8" width="6.4" height="6.4" fill="#08090b" stroke="#5fd07e" stroke-width="1.2"/>
<rect x="331.6" y="175.4" width="6.4" height="6.4" fill="#08090b" stroke="#5fd07e" stroke-width="1.2"/>
<rect x="512.1" y="171.1" width="6.4" height="6.4" fill="#08090b" stroke="#5fd07e" stroke-width="1.2"/>
<rect x="692.1" y="170.8" width="6.4" height="6.4" fill="#08090b" stroke="#5fd07e" stroke-width="1.2"/>
<rect x="872.8" y="170.8" width="6.4" height="6.4" fill="#08090b" stroke="#5fd07e" stroke-width="1.2"/>
<rect x="1052.3" y="170.8" width="6.4" height="6.4" fill="#08090b" stroke="#5fd07e" stroke-width="1.2"/>
<rect x="1232.8" y="170.8" width="6.4" height="6.4" fill="#08090b" stroke="#5fd07e" stroke-width="1.2"/>
<rect x="48.6" y="430.0" width="6.6" height="6.6" fill="none" stroke="#3fc050" stroke-width="1.3"/>
</svg>
<div class="pl" style="left:7.6px;top:411px;width:80px;text-align:center">10Hz</div>
<div class="pl" style="left:160.3px;top:411px;width:80px;text-align:center">30Hz</div>
<div class="pl" style="left:327.6px;top:411px;width:80px;text-align:center">100Hz</div>
<div class="pl" style="left:480.2px;top:411px;width:80px;text-align:center">300Hz</div>
<div class="pl" style="left:647.5px;top:411px;width:80px;text-align:center">1.0KHz</div>
<div class="pl" style="left:800.2px;top:411px;width:80px;text-align:center">3.0KHz</div>
<div class="pl" style="left:967.5px;top:411px;width:80px;text-align:center">10KHz</div>
<div class="pl" style="left:1120.2px;top:411px;width:80px;text-align:center">30KHz</div>
<div class="pl" style="right:4.2px;top:411px;text-align:right">100KHz</div>
<div class="pl" style="left:7px;top:3.7px;width:32.5px;text-align:right">25</div>
<div class="pl" style="left:7px;top:198.9px;width:32.5px;text-align:right">20</div>
<div class="pl" style="left:7px;top:394.1px;width:32.5px;text-align:right">15</div>
<div class="pl" style="left:62.2px;top:427.2px">DB(V(OUT))</div>
<div class="pl" style="left:633.6px;top:443.2px;width:107px;text-align:center">Frequency</div>
  </div>
  <div class="abs" style="left:129px;top:576px;width:1254.5px;height:1.6px;background:#2a2a2a"></div>
<div class="abs" style="left:1382.6px;top:107px;width:1.4px;height:470.6px;background:#2a2a2a"></div>
<div class="abs" style="left:43px;top:576px;width:86px;height:23.5px;background:#fbfbfb;border-right:1.5px solid #2a2a2a;border-bottom:1.5px solid #2a2a2a;border-left:1px solid #d8d8d8;border-radius:0 0 2px 3px"></div>
<div class="abs" style="left:41.5px;top:576px;width:2px;height:1.5px;background:#2a2a2a"></div>
<svg class="abs" style="left:46.5px;top:579.5px" width="12" height="15" viewBox="0 0 13 21" preserveAspectRatio="none"><path d="M0 0h9l4 4v17H0z" fill="#2a2a2a"/><path d="M1 5V3h3V1.3h4V3h2.5l1.5 1v3H1z" fill="#18a83c"/><rect x="0" y="8.3" width="13" height="1.6" fill="#9a9a9a"/><rect x="1" y="10.5" width="11" height="8" fill="#1f2426"/><path d="M1 17.5c3-1 4-6.5 6.5-6.5s2.5 3 4.5 3.5" stroke="#f0e23a" stroke-width="1.3" fill="none"/><rect x="6" y="15.5" width="6" height="2.2" fill="#28b8d0"/><path d="M1 12l2.5 2" stroke="#28b8d0" stroke-width="1.2"/></svg>
<div class="abs" style="left:61.8px;top:581px;line-height:13px"><span style="display:inline-block;white-space:pre;font-size:11px;font-weight:normal;transform:scaleX(0.8870);transform-origin:0 50%;">RunBias.dat ...</span></div>
  <div id="bsep" class="abs"></div>
  <div class="abs" style="left:422px;top:608px;width:969px;height:1px;background:#747474;z-index:3"></div>
  <div id="bottom" class="abs">
    <div class="abs" style="left:0.0px;top:0.0px;width:418.5px;height:154.0px;background:#f3f3f3"></div>
<svg class="abs" style="left:6.5px;top:7.5px" width="7" height="7" viewBox="0 0 7 7" ><path d="M0.8 0.8l5.4 5.4M6.2 0.8l-5.4 5.4" stroke="#111" stroke-width="1.5"/></svg>
<svg class="abs" style="left:7.0px;top:21.0px" width="5" height="7" viewBox="0 0 5 7" ><path d="M4.5 0.5v6L0.5 3.5z" fill="#111"/></svg>
<div class="abs" style="left:2.5px;top:149px;width:86px;height:13px;transform:rotate(-90deg);transform-origin:0 0;font-size:11.4px;line-height:13px;white-space:nowrap;color:#111"><span style="display:inline-block;white-space:pre;font-size:11.4px;font-weight:normal;transform:scaleX(0.8625);transform-origin:0 50%;">Command Window</span></div>
<div class="abs" style="left:17.5px;top:3.7px;width:397.0px;height:145.0px;background:#fff;border:1px solid #a6a6a6"></div>
<div class="abs" style="left:20.3px;top:6.3px;white-space:pre;font-family:'Liberation Mono',monospace;font-size:10.95px;line-height:12px;color:#1a1a1a">    invoked from within</div>
<div class="abs" style="left:20.3px;top:17.5px;white-space:pre;font-family:'Liberation Mono',monospace;font-size:10.95px;line-height:12px;color:#1a1a1a">"source $lFile"</div>
<div class="abs" style="left:20.3px;top:28.8px;white-space:pre;font-family:'Liberation Mono',monospace;font-size:10.95px;line-height:12px;color:#1a1a1a">Loading C:/Cadence/SPB_17.2/tools/pspice/tclscripts/pspAu</div>
<div class="abs" style="left:20.3px;top:40.0px;white-space:pre;font-family:'Liberation Mono',monospace;font-size:10.95px;line-height:12px;color:#1a1a1a">[Info] [orPrmDesigner] Starting Server</div>
<div class="abs" style="left:20.3px;top:51.3px;white-space:pre;font-family:'Liberation Mono',monospace;font-size:10.95px;line-height:12px;color:#1a1a1a">[Info] [orPrmDesigner] package require orPrmAspBase</div>
<div class="abs" style="left:20.3px;top:62.5px;white-space:pre;font-family:'Liberation Mono',monospace;font-size:10.95px;line-height:12px;color:#1a1a1a">[Info] [orPrmDesigner] package require orPrmDirMap</div>
<div class="abs" style="left:20.3px;top:73.8px;white-space:pre;font-family:'Liberation Mono',monospace;font-size:10.95px;line-height:12px;color:#1a1a1a">[Info] [orPrmDesigner] package require orPrmRequestDispat</div>
<div class="abs" style="left:20.3px;top:85.0px;white-space:pre;font-family:'Liberation Mono',monospace;font-size:10.95px;line-height:12px;color:#1a1a1a">[Info] [orPrmDesigner] Loading done</div>
<div class="abs" style="left:20.3px;top:96.3px;white-space:pre;font-family:'Liberation Mono',monospace;font-size:10.95px;line-height:12px;color:#1a1a1a"></div>
<div class="abs" style="left:20.3px;top:107.5px;white-space:pre;font-family:'Liberation Mono',monospace;font-size:10.95px;line-height:12px;color:#1a1a1a"></div>
<div class="abs" style="left:20.3px;top:118.8px;white-space:pre;font-family:'Liberation Mono',monospace;font-size:10.95px;line-height:12px;color:#1a1a1a">PSpice&gt;</div>
<div class="abs" style="left:398.3px;top:4.7px;width:15.2px;height:128.0px;background:#f0f0f0"></div>
<div class="abs" style="left:398.3px;top:61.7px;width:14.4px;height:52.0px;background:#cdcdcd"></div>
<svg class="abs" style="left:398.3px;top:4.7px" width="15" height="128" viewBox="0 0 15 128" ><path d="M3.8 11.1L7 7.9L10.2 11.1" stroke="#505050" stroke-width="1.7" fill="none"/><path d="M3.8 116.9L7 120.1L10.2 116.9" stroke="#505050" stroke-width="1.7" fill="none"/></svg>
<div class="abs" style="left:18.5px;top:132.8px;width:395.0px;height:15.0px;background:#f0f0f0"></div>
<div class="abs" style="left:35.0px;top:132.8px;width:188.0px;height:15.0px;background:#cdcdcd"></div>
<svg class="abs" style="left:18.5px;top:132.8px" width="380" height="15" viewBox="0 0 380 15" ><path d="M10.1 4.3L6.9 7.5L10.1 10.7" stroke="#505050" stroke-width="1.7" fill="none"/><path d="M368.7 4.3L371.90000000000003 7.5L368.7 10.7" stroke="#505050" stroke-width="1.7" fill="none"/></svg>
<div class="abs" style="left:418.5px;top:0.0px;width:4.0px;height:154.0px;background:#dfe4f2"></div>
<div class="abs" style="left:422.0px;top:-0.5px;width:1.3px;height:154.5px;background:#6e6e6e"></div>
<div class="abs" style="left:423.3px;top:0.0px;width:443.0px;height:154.0px;background:#f6f6f6"></div>
<div class="abs" style="left:427.7px;top:5.7px;width:10.0px;height:10.5px;background:#f4f4f4;border-right:1.4px solid #707070;border-bottom:1.4px solid #707070;border-top:1px solid #fff;border-left:1px solid #fff"></div>
<svg class="abs" style="left:429.5px;top:8.0px" width="6" height="6" viewBox="0 0 6 6" ><path d="M0.6 0.6l4.8 4.8M5.4 0.6l-4.8 4.8" stroke="#111" stroke-width="1.3"/></svg>
<div class="abs" style="left:427.7px;top:18.0px;width:10.0px;height:11.6px;background:#f4f4f4;border-right:1.4px solid #707070;border-bottom:1.4px solid #707070;border-top:1px solid #fff;border-left:1px solid #fff"></div>
<svg class="abs" style="left:430.1px;top:20.6px" width="4" height="6" viewBox="0 0 4 6" ><path d="M3.5 0.3v5.4L0.3 3z" fill="#111"/></svg>
<div class="abs" style="left:431.2px;top:32.0px;width:1.0px;height:116.5px;background:#a0a0a0"></div>
<div class="abs" style="left:435.2px;top:32.0px;width:1.0px;height:116.5px;background:#a0a0a0"></div>
<div class="abs" style="left:441.0px;top:4.0px;width:417.5px;height:145.5px;background:#fdfdfd;border:1.3px solid #6e6e6e;border-right-color:#a8a8a8;border-bottom-color:#a8a8a8"></div>
<div class="abs" style="left:445.3px;top:9.6px;width:410.0px;height:119.5px;background:#fff;border:1.2px solid #7c7c7c"></div>
<div class="abs" style="left:446.5px;top:34.8px;width:407.5px;height:1.0px;background:#efefef"></div>
<div class="abs" style="left:569.0px;top:11.0px;width:1.0px;height:24.0px;background:#f0f0f0"></div>
<div class="abs" style="left:742.5px;top:11.0px;width:1.0px;height:24.0px;background:#f0f0f0"></div>
<div class="abs" style="left:832.5px;top:11.0px;width:1.0px;height:24.0px;background:#f0f0f0"></div>
<div class="abs" style="left:442.3px;top:129.8px;width:416.0px;height:18.6px;background:#e9e9e9"></div>
<div class="abs" style="left:446.0px;top:129.0px;width:408.5px;height:1.4px;background:#3a3a3a"></div>
<svg class="abs" style="left:442.3px;top:130.4px" width="190" height="20" viewBox="0 0 190 20" ><path d="M4.5 9.5l5-4v8z" fill="#b4b4b4"/><path d="M27.5 9.5l-5-4v8z" fill="#b4b4b4"/><path d="M18 2v15" stroke="#d0d0d0" stroke-width="1"/><path d="M34 0l4.5 17h42l5.5-17z" fill="#fff"/><path d="M34 0l4.5 17.3h42l5.5-17.3M128 0.5l-5 17h-38M123 17.5h51l6-17" stroke="#2a2a2a" stroke-width="1.2" fill="none"/><path d="M88 4l-3 6 3.5 7.5M130.5 4l-3 6 3.5 7.5" stroke="#2a2a2a" stroke-width="1" fill="none"/></svg>
<div class="abs" style="left:484.2px;top:134.6px;white-space:pre;line-height:13px"><span style="display:inline-block;white-space:pre;font-size:11px;font-weight:normal;transform:scaleX(0.8909);transform-origin:0 50%;">Analysis</span></div>
<div class="abs" style="left:533.8px;top:134.6px;white-space:pre;line-height:13px"><span style="display:inline-block;white-space:pre;font-size:11px;font-weight:normal;transform:scaleX(0.9751);transform-origin:0 50%;">Watch</span></div>
<div class="abs" style="left:578.6px;top:134.6px;white-space:pre;line-height:13px"><span style="display:inline-block;white-space:pre;font-size:11px;font-weight:normal;transform:scaleX(0.9329);transform-origin:0 50%;">Devices</span></div>
<div class="abs" style="left:453.5px;top:73.5px;white-space:pre;line-height:13px"><span style="display:inline-block;white-space:pre;font-size:11px;font-weight:normal;transform:scaleX(0.9106);transform-origin:0 50%;">Start =  10</span></div>
<div class="abs" style="left:575.2px;top:73.5px;white-space:pre;line-height:13px"><span style="display:inline-block;white-space:pre;font-size:11px;font-weight:normal;transform:scaleX(0.9081);transform-origin:0 50%;">Freq =  100.0E+03</span></div>
<div class="abs" style="left:749.2px;top:73.5px;white-space:pre;line-height:13px"><span style="display:inline-block;white-space:pre;font-size:11px;font-weight:normal;transform:scaleX(0.9016);transform-origin:0 50%;">End =  100.0E+...</span></div>
<div class="abs" style="left:864.0px;top:0.0px;width:3.5px;height:154.0px;background:#dfe4f2"></div>
<div class="abs" style="left:867.5px;top:-0.5px;width:1.3px;height:154.5px;background:#6e6e6e"></div>
<div class="abs" style="left:869.3px;top:0.0px;width:522.0px;height:154.0px;background:#f6f6f6"></div>
<div class="abs" style="left:872.8px;top:5.7px;width:10.0px;height:10.5px;background:#f4f4f4;border-right:1.4px solid #707070;border-bottom:1.4px solid #707070;border-top:1px solid #fff;border-left:1px solid #fff"></div>
<svg class="abs" style="left:874.6px;top:8.0px" width="6" height="6" viewBox="0 0 6 6" ><path d="M0.6 0.6l4.8 4.8M5.4 0.6l-4.8 4.8" stroke="#111" stroke-width="1.3"/></svg>
<div class="abs" style="left:872.8px;top:18.0px;width:10.0px;height:11.6px;background:#f4f4f4;border-right:1.4px solid #707070;border-bottom:1.4px solid #707070;border-top:1px solid #fff;border-left:1px solid #fff"></div>
<svg class="abs" style="left:875.2px;top:20.6px" width="4" height="6" viewBox="0 0 4 6" ><path d="M3.5 0.3v5.4L0.3 3z" fill="#111"/></svg>
<div class="abs" style="left:876.3px;top:32.0px;width:1.0px;height:116.5px;background:#a0a0a0"></div>
<div class="abs" style="left:880.3px;top:32.0px;width:1.0px;height:116.5px;background:#a0a0a0"></div>
<div class="abs" style="left:885.3px;top:3.5px;width:499.5px;height:145.0px;background:#fff;border:1px solid #8e8e8e"></div>
<div class="abs" style="left:903.0px;top:8.2px;white-space:pre;line-height:13px"><span style="display:inline-block;white-space:pre;font-size:11px;font-weight:normal;transform:scaleX(0.9104);transform-origin:0 50%;">Circuit read in and checked, no errors</span></div>
<div class="abs" style="left:903.0px;top:25.5px;white-space:pre;line-height:13px"><span style="display:inline-block;white-space:pre;font-size:11px;font-weight:normal;transform:scaleX(0.9046);transform-origin:0 50%;">Calculating bias point</span></div>
<div class="abs" style="left:903.0px;top:42.8px;white-space:pre;line-height:13px"><span style="display:inline-block;white-space:pre;font-size:11px;font-weight:normal;transform:scaleX(0.9177);transform-origin:0 50%;">Bias point calculated</span></div>
<div class="abs" style="left:903.0px;top:60.1px;white-space:pre;line-height:13px"><span style="display:inline-block;white-space:pre;font-size:11px;font-weight:normal;transform:scaleX(0.8962);transform-origin:0 50%;">AC (and Noise) Analysis</span></div>
<div class="abs" style="left:903.0px;top:77.4px;white-space:pre;line-height:13px"><span style="display:inline-block;white-space:pre;font-size:11px;font-weight:normal;transform:scaleX(0.8979);transform-origin:0 50%;">AC Analysis finished</span></div>
<div class="abs" style="left:909.5px;top:94.7px;white-space:pre;line-height:13px"><span style="display:inline-block;white-space:pre;font-size:11px;font-weight:normal;transform:scaleX(0.9075);transform-origin:0 50%;">Total job time (using Solver 1)   =         .08</span></div>
<div class="abs" style="left:903.0px;top:112.0px;white-space:pre;line-height:13px"><span style="display:inline-block;white-space:pre;font-size:11px;font-weight:normal;transform:scaleX(0.9003);transform-origin:0 50%;">INFO(ORPROBE-3190): Simulation complete</span></div>
<div class="abs" style="left:1367.8px;top:4.5px;width:16.0px;height:126.0px;background:#f0f0f0"></div>
<div class="abs" style="left:1367.8px;top:55.5px;width:15.2px;height:56.7px;background:#cdcdcd"></div>
<svg class="abs" style="left:1367.8px;top:4.5px" width="16" height="126" viewBox="0 0 16 126" ><path d="M4.5 11.6L7.7 8.4L10.9 11.6" stroke="#505050" stroke-width="1.7" fill="none"/><path d="M4.5 114.7L7.7 117.89999999999999L10.9 114.7" stroke="#505050" stroke-width="1.7" fill="none"/></svg>
<div class="abs" style="left:886.3px;top:130.6px;width:497.5px;height:17.0px;background:#f0f0f0"></div>
<div class="abs" style="left:903.0px;top:130.6px;width:292.0px;height:17.0px;background:#cdcdcd"></div>
<svg class="abs" style="left:886.3px;top:130.6px" width="482" height="17" viewBox="0 0 482 17" ><path d="M9.3 5.3L6.1 8.5L9.3 11.7" stroke="#505050" stroke-width="1.7" fill="none"/><path d="M471.29999999999995 5.3L474.5 8.5L471.29999999999995 11.7" stroke="#505050" stroke-width="1.7" fill="none"/></svg>
  </div>
  <div id="status" class="abs">
    <div class="abs" style="left:3.0999999999999996px;top:7.6px;line-height:14px;white-space:nowrap"><span style="display:inline-block;white-space:pre;font-size:12px;font-weight:normal;transform:scaleX(0.9151);transform-origin:0 50%;">Toggle the Y Axis between Log and Linear Scaling</span></div>
<div class="abs" style="left:891.3px;top:3.0px;width:1.0px;height:19.0px;background:#dcdcdc"></div>
<div class="abs" style="left:1039.8px;top:3.0px;width:1.0px;height:19.0px;background:#dcdcdc"></div>
<div class="abs" style="left:1190.3px;top:3.0px;width:1.0px;height:19.0px;background:#dcdcdc"></div>
<div class="abs" style="left:1044.5px;top:7.6px;line-height:14px;white-space:pre"><span style="display:inline-block;white-space:pre;font-size:12px;font-weight:normal;transform:scaleX(0.8713);transform-origin:0 50%;">Freq =  100.0E+03</span></div>
<div class="abs" style="left:1196.2px;top:7.6px;line-height:14px;white-space:pre"><span style="display:inline-block;white-space:pre;font-size:12px;font-weight:normal;transform:scaleX(0.8273);transform-origin:0 50%;">100%</span></div>
<div class="abs" style="left:1236.8px;top:6.0px;width:97.0px;height:16.5px;background:#0a9e42"></div>
<div class="abs" style="left:1338.9px;top:5.4px;width:30.4px;height:16.4px;background:#000"></div>
<svg class="abs" style="left:1338.9px;top:5.4px" width="31" height="17" viewBox="0 0 31 17" ><path d="M0 8.5h5.5l3 5.2 4.2-11 4.5 11 4.2-11 2 5.8h7.6" stroke="#28c0e4" stroke-width="1.3" fill="none" stroke-linejoin="miter"/></svg>
<div class="abs" style="left:1387.0px;top:19.5px;width:1.6px;height:1.6px;background:#b4b4b4"></div>
<div class="abs" style="left:1383.8px;top:19.5px;width:1.6px;height:1.6px;background:#b4b4b4"></div>
<div class="abs" style="left:1380.6px;top:19.5px;width:1.6px;height:1.6px;background:#b4b4b4"></div>
<div class="abs" style="left:1387.0px;top:16.3px;width:1.6px;height:1.6px;background:#b4b4b4"></div>
<div class="abs" style="left:1383.8px;top:16.3px;width:1.6px;height:1.6px;background:#b4b4b4"></div>
<div class="abs" style="left:1387.0px;top:13.1px;width:1.6px;height:1.6px;background:#b4b4b4"></div>
  </div>
</div>
</div></body>
</html>
